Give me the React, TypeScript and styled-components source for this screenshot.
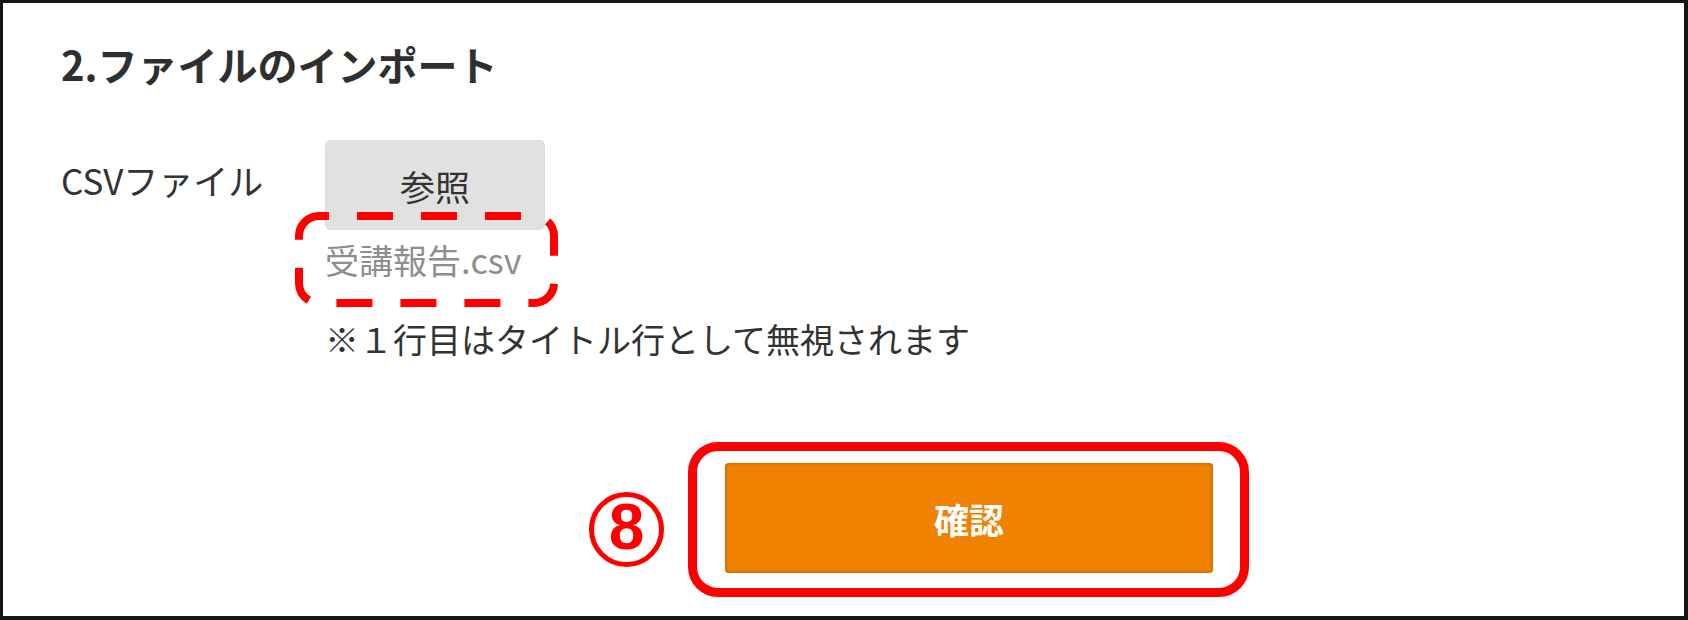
import React from 'react';
import styled, { createGlobalStyle } from 'styled-components';

const GlobalStyle = createGlobalStyle`
  html, body {
    margin: 0;
    padding: 0;
    background: #ffffff;
  }
  body {
    font-family: "Noto Sans CJK JP", "Noto Sans", sans-serif;
  }
`;

const Frame = styled.div`
  width: 1688px;
  height: 620px;
  box-sizing: border-box;
  border-style: solid;
  border-color: #141414;
  border-width: 3px 4px 4px 3px;
  padding: 31px 0 0 58px;
  background: #ffffff;
  display: flex;
  flex-direction: column;
  color: #333333;
`;

const Title = styled.h2`
  margin: 0;
  font-size: 40px;
  line-height: 60px;
  font-weight: 700;
  color: #2f2f2f;
`;

const FormRow = styled.div`
  display: grid;
  grid-template-columns: 264px auto;
  margin-top: 46px;
`;

const Label = styled.div`
  font-size: 35px;
  line-height: 80px;
  color: #333333;
`;

const Field = styled.div`
  display: flex;
  flex-direction: column;
  align-items: flex-start;
`;

const BrowseButton = styled.button`
  width: 220px;
  height: 90px;
  border: none;
  border-radius: 6px;
  background: #e1e1e1;
  box-shadow: inset 0 0 2px rgba(0, 0, 0, 0.08);
  font-family: inherit;
  font-size: 35px;
  color: #333333;
  padding: 0;
  cursor: pointer;
`;

const FileName = styled.div`
  position: relative;
  font-size: 34px;
  line-height: 60px;
  color: #8e8e8e;
`;

const DashedMark = styled.svg`
  position: absolute;
  left: -30px;
  top: -18px;
  width: 263px;
  height: 95px;
  pointer-events: none;
`;

const Note = styled.div`
  margin-top: 19px;
  font-size: 34px;
  line-height: 60px;
  color: #333333;
`;

const Actions = styled.div`
  display: flex;
  align-items: flex-start;
  gap: 24px;
  margin-top: 73px;
  padding-left: 528px;
`;

const StepMark = styled.span`
  box-sizing: border-box;
  width: 75px;
  height: 75px;
  margin-top: 50px;
  border: 5px solid #ff0000;
  border-radius: 50%;
  display: flex;
  align-items: center;
  justify-content: center;
  padding-bottom: 6px;
  font-family: "Liberation Sans", Arial, sans-serif;
  font-size: 64px;
  font-weight: 700;
  line-height: 1;
  color: #ff0000;
`;

const Highlight = styled.div`
  border: 9px solid #ff0000;
  border-radius: 30px;
  padding: 12px 27px 15px 28px;
`;

const ConfirmButton = styled.button`
  width: 488px;
  height: 110px;
  border: none;
  border-radius: 4px;
  background: #ef8200;
  box-shadow: inset 0 0 3px 1px rgba(170, 80, 0, 0.55);
  font-family: inherit;
  font-size: 35px;
  font-weight: 700;
  color: #ffffff;
  padding: 0;
  cursor: pointer;
`;

export default function App() {
  return (
    <>
      <GlobalStyle />
      <Frame>
        <Title>2.ファイルのインポート</Title>
        <FormRow>
          <Label>CSVファイル</Label>
          <Field>
            <BrowseButton>参照</BrowseButton>
            <FileName>
              受講報告.csv
              <DashedMark viewBox="0 0 263 95">
                <rect
                  x="4"
                  y="4"
                  width="255"
                  height="87"
                  rx="20"
                  fill="none"
                  stroke="#ff0000"
                  strokeWidth="8"
                  strokeDasharray="36 28"
                  strokeDashoffset="26"
                />
              </DashedMark>
            </FileName>
            <Note>※１行目はタイトル行として無視されます</Note>
          </Field>
        </FormRow>
        <Actions>
          <StepMark>8</StepMark>
          <Highlight>
            <ConfirmButton>確認</ConfirmButton>
          </Highlight>
        </Actions>
      </Frame>
    </>
  );
}
